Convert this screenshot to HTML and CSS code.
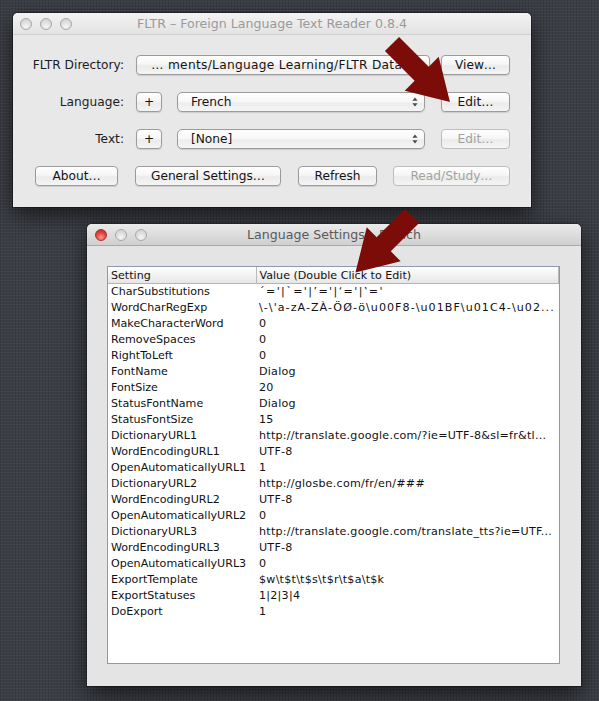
FILE: index.html
```html
<!DOCTYPE html>
<html>
<head>
<meta charset="utf-8">
<link rel="stylesheet" href="styles.css">
</head>
<body>
<div class="desktop">
  <div class="window main">
    <div class="titlebar inactive">
      <div class="lights"><span class="light"></span><span class="light"></span><span class="light"></span></div>
      <div class="title">FLTR – Foreign Language Text Reader 0.8.4</div>
      <div></div>
    </div>
    <div class="form">
      <div class="row">
        <span class="lbl">FLTR Directory:</span>
        <button class="btn dir">… ments/Language Learning/FLTR Data…</button>
        <button class="btn side">View…</button>
      </div>
      <div class="row">
        <span class="lbl">Language:</span>
        <button class="btn plus">+</button>
        <div class="popup"><span>French</span><svg class="updown" width="6" height="10" viewBox="0 0 6 10"><path d="M3 0.5 L5.6 3.8 H0.4 Z M3 9.5 L5.6 6.2 H0.4 Z" fill="#4a4a4a"/></svg></div>
        <button class="btn side">Edit…</button>
      </div>
      <div class="row">
        <span class="lbl">Text:</span>
        <button class="btn plus">+</button>
        <div class="popup"><span>[None]</span><svg class="updown" width="6" height="10" viewBox="0 0 6 10"><path d="M3 0.5 L5.6 3.8 H0.4 Z M3 9.5 L5.6 6.2 H0.4 Z" fill="#4a4a4a"/></svg></div>
        <button class="btn side disabled">Edit…</button>
      </div>
      <div class="row bottom">
        <button class="btn about">About…</button>
        <button class="btn general">General Settings…</button>
        <button class="btn refresh">Refresh</button>
        <button class="btn read disabled">Read/Study…</button>
      </div>
    </div>
  </div>

  <div class="window dialog">
    <div class="titlebar active">
      <div class="lights"><span class="light red"></span><span class="light"></span><span class="light"></span></div>
      <div class="title">Language Settings – French</div>
      <div></div>
    </div>
    <div class="dialog-body">
      <div class="table-frame">
        <table class="settings">
          <colgroup><col class="c1"><col></colgroup>
          <thead>
            <tr><th>Setting</th><th>Value (Double Click to Edit)</th></tr>
          </thead>
          <tbody>
            <tr><td>CharSubstitutions</td><td class="subs">´='|`='|’='|‘='|‛='</td></tr>
            <tr><td>WordCharRegExp</td><td class="regex">\-\'a-zA-ZÀ-ÖØ-ö\u00F8-\u01BF\u01C4-\u02...</td></tr>
            <tr><td>MakeCharacterWord</td><td>0</td></tr>
            <tr><td>RemoveSpaces</td><td>0</td></tr>
            <tr><td>RightToLeft</td><td>0</td></tr>
            <tr><td>FontName</td><td>Dialog</td></tr>
            <tr><td>FontSize</td><td>20</td></tr>
            <tr><td>StatusFontName</td><td>Dialog</td></tr>
            <tr><td>StatusFontSize</td><td>15</td></tr>
            <tr><td>DictionaryURL1</td><td>http://translate.google.com/?ie=UTF-8&amp;sl=fr&amp;tl...</td></tr>
            <tr><td>WordEncodingURL1</td><td>UTF-8</td></tr>
            <tr><td>OpenAutomaticallyURL1</td><td>1</td></tr>
            <tr><td>DictionaryURL2</td><td>http://glosbe.com/fr/en/###</td></tr>
            <tr><td>WordEncodingURL2</td><td>UTF-8</td></tr>
            <tr><td>OpenAutomaticallyURL2</td><td>0</td></tr>
            <tr><td>DictionaryURL3</td><td>http://translate.google.com/translate_tts?ie=UTF...</td></tr>
            <tr><td>WordEncodingURL3</td><td>UTF-8</td></tr>
            <tr><td>OpenAutomaticallyURL3</td><td>0</td></tr>
            <tr><td>ExportTemplate</td><td>$w\t$t\t$s\t$r\t$a\t$k</td></tr>
            <tr><td>ExportStatuses</td><td>1|2|3|4</td></tr>
            <tr><td>DoExport</td><td>1</td></tr>
          </tbody>
        </table>
      </div>
    </div>
  </div>

  <svg class="arrows" width="599" height="701" viewBox="0 0 599 701">
    <polygon transform="translate(392,44) rotate(45)" points="0,-10 42,-10 42,-24 82,0 42,24 42,10 0,10" fill="#7b0c08"/>
    <polygon transform="translate(412,216) rotate(135)" points="0,-10 40,-10 40,-24 80,0 40,24 40,10 0,10" fill="#7b0c08"/>
  </svg>
</div>
</body>
</html>
```

FILE: styles.css
```css
html, body {
  margin: 0;
  padding: 0;
}
body {
  width: 599px;
  height: 701px;
  overflow: hidden;
  font-family: "DejaVu Sans", "Liberation Sans", sans-serif;
}
.desktop {
  position: relative;
  width: 599px;
  height: 701px;
  background-color: #3b3e45;
  background-image:
    repeating-linear-gradient(0deg, rgba(255,255,255,0.04) 0 1px, transparent 1px 3px),
    repeating-linear-gradient(90deg, rgba(0,0,0,0.12) 0 1px, transparent 1px 3px);
}
.window {
  position: absolute;
  box-sizing: border-box;
  background: #e8e8e8;
  border-radius: 5px 5px 0 0;
  box-shadow: 0 8px 22px rgba(0,0,0,0.6), 0 0 0 1px rgba(0,0,0,0.3);
  display: flex;
  flex-direction: column;
}
.main {
  left: 13px;
  top: 13px;
  width: 518px;
  height: 194px;
}
.dialog {
  left: 87px;
  top: 224px;
  width: 494px;
  height: 462px;
  background: #e4e4e4;
}
.titlebar {
  height: 22px;
  box-sizing: border-box;
  display: grid;
  grid-template-columns: 70px 1fr 70px;
  align-items: center;
  border-radius: 5px 5px 0 0;
  flex: none;
}
.titlebar.inactive {
  background: linear-gradient(#f3f3f3, #e3e3e3);
  border-bottom: 1px solid #cfcfcf;
}
.titlebar.active {
  background: linear-gradient(#ebebeb, #cfcfcf);
  border-bottom: 1px solid #a9a9a9;
}
.lights {
  display: flex;
  gap: 8px;
  padding-left: 8px;
}
.main .lights {
  padding-left: 7px;
}
.light {
  width: 12px;
  height: 12px;
  box-sizing: border-box;
  border-radius: 50%;
  border: 1px solid #a9a9a9;
  background: radial-gradient(circle at 50% 75%, #f6f6f6, #d6d6d6 70%);
}
.light.red {
  border-color: #a8322c;
  background: radial-gradient(circle at 50% 75%, #f79a92, #e0433b 55%, #b9271f);
}
.title {
  text-align: center;
  font-size: 12.6px;
  color: #9a9a9a;
  white-space: nowrap;
}
.active .title {
  color: #5a5a5a;
}
.form {
  display: flex;
  flex-direction: column;
  gap: 17px;
  padding-top: 20px;
}
.row {
  display: flex;
  align-items: center;
  height: 20px;
}
.lbl {
  width: 111px;
  margin-right: 12px;
  text-align: right;
  font-size: 12.2px;
  color: #1c1c1c;
}
.btn {
  height: 20px;
  box-sizing: border-box;
  padding: 0;
  border: 1px solid #9b9b9b;
  border-radius: 4px;
  background: linear-gradient(#ffffff, #f6f6f6 45%, #ebebeb 55%, #f5f5f5);
  box-shadow: 0 1px 1px rgba(0,0,0,0.12);
  font-family: "DejaVu Sans", "Liberation Sans", sans-serif;
  font-size: 12.2px;
  color: #141414;
  white-space: nowrap;
  overflow: hidden;
}
.btn.disabled {
  color: #a2a2a2;
  border-color: #bdbdbd;
  box-shadow: none;
}
.dir {
  width: 294px;
  letter-spacing: 0.3px;
}
.side {
  width: 69px;
  margin-left: 11px;
}
.plus {
  width: 26px;
}
.popup {
  width: 248px;
  height: 20px;
  box-sizing: border-box;
  margin-left: 15px;
  margin-right: 5px;
  padding: 0 6px 0 13px;
  display: flex;
  align-items: center;
  justify-content: space-between;
  border: 1px solid #9b9b9b;
  border-radius: 5px;
  background: linear-gradient(#ffffff, #f7f7f7 50%, #ececec 55%, #f6f6f6);
  box-shadow: 0 1px 1px rgba(0,0,0,0.12);
  font-size: 12.2px;
  color: #141414;
}
.row.bottom {
  padding-left: 22px;
}
.about {
  width: 83px;
}
.general {
  width: 146px;
  margin-left: 17px;
}
.refresh {
  width: 79px;
  margin-left: 17px;
}
.read {
  width: 117px;
  margin-left: 16px;
}
.dialog-body {
  flex: 1;
  display: flex;
  padding: 20px 21px 22px 20px;
}
.table-frame {
  flex: 1;
  background: #ffffff;
  border: 1px solid #8e9aab;
  overflow: hidden;
}
.settings {
  width: 100%;
  table-layout: fixed;
  border-collapse: collapse;
  font-size: 11.1px;
  color: #111;
}
.settings col.c1 {
  width: 148px;
}
.settings th {
  height: 16px;
  padding: 0 0 0 3px;
  text-align: left;
  font-weight: normal;
  background: linear-gradient(#ffffff, #f2f2f2 50%, #e6e6e6);
  border-bottom: 1px solid #b3b3b3;
  border-right: 1px solid #b9b9b9;
  white-space: nowrap;
  overflow: hidden;
}
.settings td {
  height: 16px;
  padding: 0 0 0 3px;
  white-space: nowrap;
  overflow: hidden;
  line-height: 16px;
}
.settings td + td {
  letter-spacing: 0.25px;
}
.settings td.subs {
  letter-spacing: 1.4px;
}
.settings td.regex {
  letter-spacing: 1.05px;
}
.arrows {
  position: absolute;
  left: 0;
  top: 0;
  pointer-events: none;
}
```
